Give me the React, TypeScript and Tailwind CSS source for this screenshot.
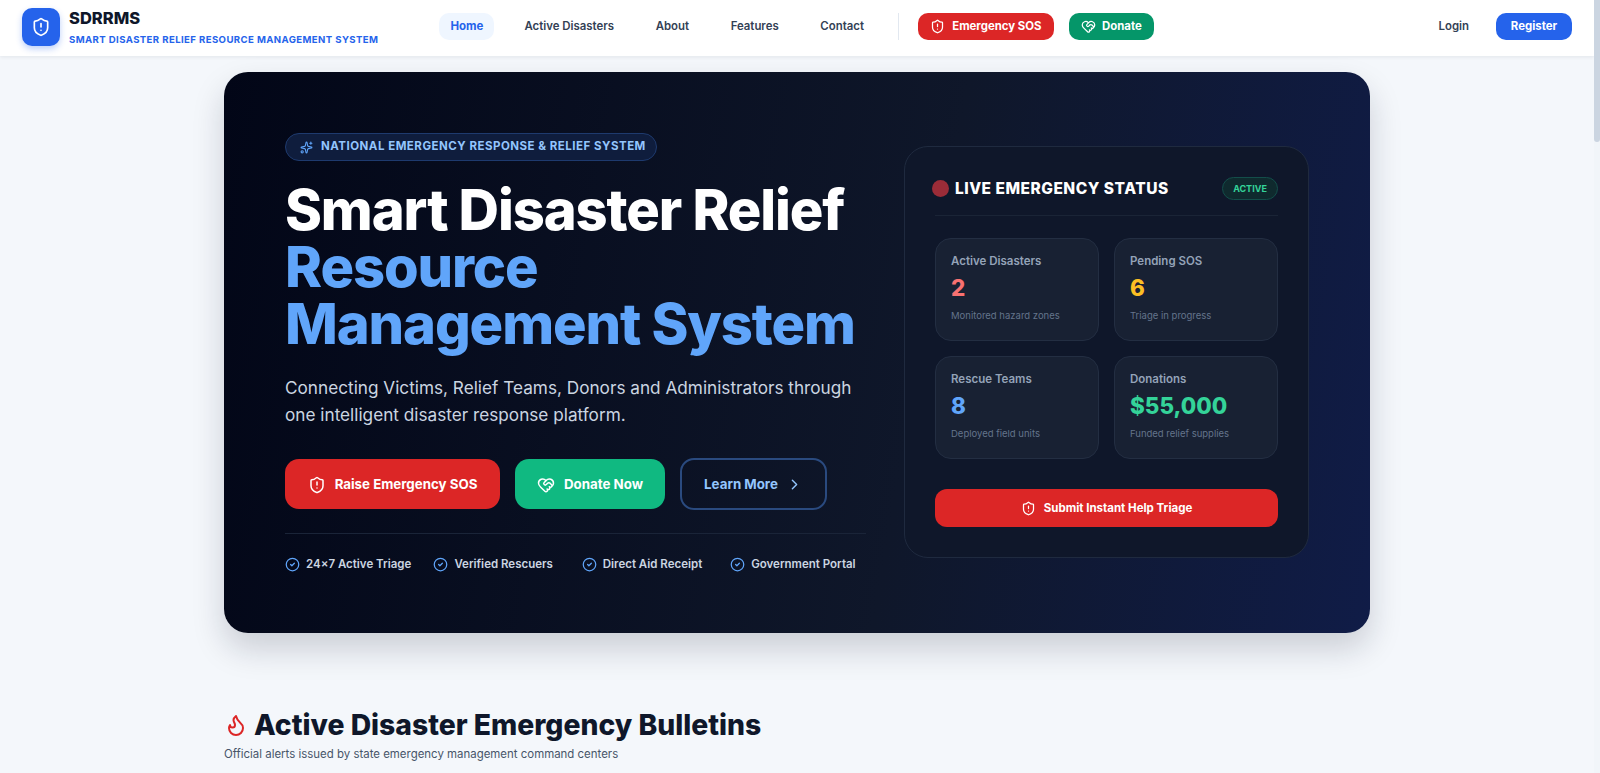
import React from "react";
import {
  ChevronRight,
  CircleCheck,
  Flame,
  HeartHandshake,
  ShieldAlert,
  Sparkles,
} from "lucide-react";

const navLinks = ["Active Disasters", "About", "Features", "Contact"];
const perks = [
  "24×7 Active Triage",
  "Verified Rescuers",
  "Direct Aid Receipt",
  "Government Portal",
];

const StatCard = ({
  label,
  value,
  note,
  color,
}: {
  label: string;
  value: string;
  note: string;
  color: string;
}) => (
  <div className="h-[103px] rounded-2xl border border-[#232e42] bg-[#182133] px-[15px] pt-[13px]">
    <div className="text-[11.5px] leading-[18px] font-semibold text-[#94a3b8]">
      {label}
    </div>
    <div className={`mt-[3px] text-[22.4px] leading-[30px] font-extrabold ${color}`}>
      {value}
    </div>
    <div className="mt-[5px] text-[9.5px] leading-[16px] text-[#64748b]">{note}</div>
  </div>
);

const App = () => {
  return (
    <div className="flex h-screen overflow-hidden bg-[#f4f7fb] font-['Inter',sans-serif]">
      <div className="min-w-0 flex-1">
        {/* navbar */}
        <header className="flex h-14 items-center justify-between bg-white px-[22px] shadow-[0_1px_4px_rgba(15,23,42,0.08)]">
          <div className="flex items-center">
            <div className="mt-[-3px] flex h-[38px] w-[38px] items-center justify-center rounded-[10px] bg-[#2563eb] shadow-[0_3px_6px_rgba(37,99,235,0.3)]">
              <ShieldAlert className="h-5 w-5 text-white" strokeWidth={2} />
            </div>
            <div className="mt-[-5px] ml-[9px]">
              <div className="text-[16.5px] leading-[24px] font-extrabold text-[#0f172a]">
                SDRRMS
              </div>
              <div className="mt-[4px] text-[9.6px] leading-[12px] font-bold tracking-[0.4px] text-[#2563eb]">
                SMART DISASTER RELIEF RESOURCE MANAGEMENT SYSTEM
              </div>
            </div>
          </div>

          <nav className="mb-[3px] ml-[61px] flex flex-1 items-center">
            <a className="flex h-[27px] w-[55px] items-center justify-center rounded-[10px] bg-[#eff6ff] pt-px text-[11.5px] font-bold text-[#2563eb]">
              Home
            </a>
            <div className="ml-[30px] flex items-center gap-[41.7px] pt-px">
              {navLinks.map((link) => (
                <a key={link} className="text-[11.4px] font-semibold text-[#334155]">
                  {link}
                </a>
              ))}
            </div>
            <div className="mr-[19px] ml-[34px] h-[27px] w-px bg-[#e2e8f0]" />
            <a className="flex h-[27px] w-[136px] items-center justify-center gap-[7px] rounded-[10px] bg-[#dc2626] text-[11.4px] font-bold text-white">
              <ShieldAlert className="h-[15px] w-[15px]" />
              Emergency SOS
            </a>
            <a className="ml-[15px] flex h-[27px] w-[85px] items-center justify-center gap-[6px] rounded-[10px] bg-[#059669] text-[11.4px] font-bold text-white">
              <HeartHandshake className="h-[15px] w-[15px]" />
              Donate
            </a>
          </nav>

          <div className="mb-[3px] flex items-center">
            <a className="pt-px text-[11.4px] font-semibold text-[#334155]">Login</a>
            <a className="ml-[27px] flex h-[27px] w-[76px] items-center justify-center rounded-[10px] bg-[#2563eb] pt-px text-[11.4px] font-bold text-white">
              Register
            </a>
          </div>
        </header>

        <main className="mx-auto w-[1146px] pt-[16px]">
          {/* hero */}
          <section className="flex h-[561px] items-start justify-between rounded-3xl bg-[linear-gradient(100deg,#020617_0%,#0f172a_60%,#101c47_100%)] py-[61px] pr-[61px] pl-[61px] shadow-[0_16px_32px_rgba(15,23,42,0.18)]">
            <div className="w-[581px]">
              <div className="flex h-[28px] w-[372px] items-center gap-[8px] rounded-full border border-[#1e3a6e] bg-[#0f1d3d] pl-[14px] text-[11.5px] font-bold tracking-[0.5px] text-[#93c5fd]">
                <Sparkles className="h-[13px] w-[13px] text-[#60a5fa]" />
                NATIONAL EMERGENCY RESPONSE &amp; RELIEF SYSTEM
              </div>
              <h1 className="mt-[21px] text-[56px] leading-[57px] font-extrabold tracking-[-1.1px] text-white">
                Smart Disaster Relief
                <br />
                <span className="text-[#60a5fa]">
                  Resource
                  <br />
                  Management System
                </span>
              </h1>
              <p className="mt-[21px] w-[581px] text-[17.2px] leading-[27px] text-[#cbd5e1]">
                Connecting Victims, Relief Teams, Donors and Administrators through one intelligent disaster response platform.
              </p>
              <div className="mt-[30px] flex items-center">
                <a className="flex h-[50px] w-[215px] items-center justify-center gap-[9px] rounded-[14px] bg-[#dc2626] pt-px text-[13.3px] font-bold text-white">
                  <ShieldAlert className="h-[18px] w-[18px]" />
                  Raise Emergency SOS
                </a>
                <a className="ml-[15px] flex h-[50px] w-[150px] items-center justify-center gap-[9px] rounded-[14px] bg-[#10b981] pt-px text-[13.3px] font-bold text-white">
                  <HeartHandshake className="h-[18px] w-[18px]" />
                  Donate Now
                </a>
                <a className="ml-[15px] flex h-[52px] w-[147px] items-center justify-center gap-[8px] rounded-[14px] border-2 border-[#2a4a7f] pt-px text-[13.3px] font-bold text-[#93c5fd]">
                  Learn More
                  <ChevronRight className="h-[17px] w-[17px]" />
                </a>
              </div>
              <div className="mt-[23px] flex border-t border-[#1a2438] pt-[21px]">
                {perks.map((perk) => (
                  <div
                    key={perk}
                    className="flex w-[148.4px] shrink-0 items-center gap-[6px] text-[11.5px] leading-[18px] font-semibold whitespace-nowrap text-[#cbd5e1]"
                  >
                    <CircleCheck className="h-[15px] w-[15px] shrink-0 text-[#60a5fa]" />
                    {perk}
                  </div>
                ))}
              </div>
            </div>

            {/* live status panel */}
            <div className="mt-[13px] h-[412px] w-[405px] rounded-3xl border border-[#1f2a3f] bg-[#0f172a] px-[30px] pt-[30px]">
              <div className="flex h-[39px] items-start justify-between border-b border-[#1a2436]">
                <div className="-ml-[3px] flex h-[23px] items-center gap-[6px]">
                  <span className="h-[17px] w-[17px] rounded-full bg-[#9b2c38]" />
                  <span className="text-[15.5px] font-extrabold tracking-[0.5px] text-white">
                    LIVE EMERGENCY STATUS
                  </span>
                </div>
                <span className="flex h-[23px] w-[56px] items-center justify-center rounded-full border border-[#134e4a] bg-[#0f2a2e] text-[9px] font-bold text-[#34d399]">
                  ACTIVE
                </span>
              </div>
              <div className="mt-[22px] grid grid-cols-2 gap-[15px]">
                <StatCard label="Active Disasters" value="2" note="Monitored hazard zones" color="text-[#f87171]" />
                <StatCard label="Pending SOS" value="6" note="Triage in progress" color="text-[#fbbf24]" />
                <StatCard label="Rescue Teams" value="8" note="Deployed field units" color="text-[#60a5fa]" />
                <StatCard label="Donations" value="$55,000" note="Funded relief supplies" color="text-[#34d399]" />
              </div>
              <a className="mt-[30px] flex h-[38px] items-center justify-center gap-[8px] rounded-xl bg-[#dc2626] pt-px text-[11.5px] font-bold text-white">
                <ShieldAlert className="h-[15px] w-[15px]" />
                Submit Instant Help Triage
              </a>
            </div>
          </section>

          {/* bulletins */}
          <section className="mt-[74px]">
            <h2 className="flex items-center gap-[6px] text-[28.3px] leading-[36px] font-extrabold text-[#0f172a]">
              <Flame className="h-[24px] w-[24px] text-[#dc2626]" />
              Active Disaster Emergency Bulletins
            </h2>
            <p className="mt-[2px] text-[11.45px] leading-[18px] text-[#475569]">
              Official alerts issued by state emergency management command centers
            </p>
          </section>
        </main>
      </div>

      {/* page scrollbar */}
      <div className="w-[6px] shrink-0 bg-[#f1f5f9]">
        <div className="h-[142px] rounded-b-full bg-[#cbd5e1]" />
      </div>
    </div>
  );
};

export default App;
